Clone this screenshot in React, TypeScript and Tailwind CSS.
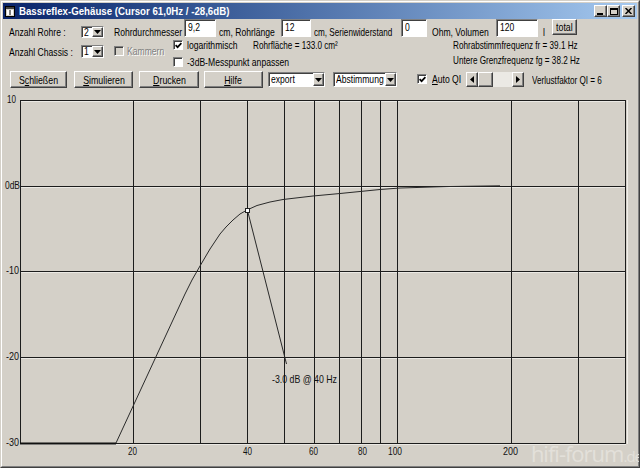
import React from "react";

const raised =
  "border border-t-white border-l-white border-r-[#404040] border-b-[#404040] shadow-[inset_-1px_-1px_0_#808080] bg-[#d4d0c8]";
const sunken =
  "border border-t-[#808080] border-l-[#808080] border-r-white border-b-white shadow-[inset_1px_1px_0_#404040]";

/* The reference is horizontally squeezed: text is drawn narrower than the font's natural width. */
function T({ children, className = "" }: { children: React.ReactNode; className?: string }) {
  return (
    <span className={`inline-block whitespace-nowrap origin-left scale-x-[0.78] ${className}`}>
      {children}
    </span>
  );
}
function TN({ children, className = "" }: { children: React.ReactNode; className?: string }) {
  return (
    <span className={`inline-block whitespace-nowrap origin-left scale-x-[0.74] ${className}`}>
      {children}
    </span>
  );
}
function TC({ children }: { children: React.ReactNode }) {
  return <span className="inline-block whitespace-nowrap origin-center scale-x-[0.8]">{children}</span>;
}

function Check({ checked, disabled }: { checked?: boolean; disabled?: boolean }) {
  return (
    <div
      className={`w-[10px] h-[10px] shrink-0 flex items-center justify-center ${sunken} ${
        disabled ? "bg-[#d4d0c8]" : "bg-white"
      }`}
    >
      {checked && (
        <svg width="7" height="7" viewBox="0 0 7 7">
          <path d="M0.6 3.2 L2.6 5.2 L6.4 1.2" stroke="#000" strokeWidth="1.7" fill="none" />
        </svg>
      )}
    </div>
  );
}

function Arrow({ dir }: { dir: "down" | "left" | "right" }) {
  if (dir === "down")
    return (
      <svg width="7" height="4" viewBox="0 0 7 4">
        <path d="M0 0 H7 L3.5 4 Z" fill="#000" />
      </svg>
    );
  if (dir === "left")
    return (
      <svg width="4" height="7" viewBox="0 0 4 7">
        <path d="M4 0 V7 L0 3.5 Z" fill="#000" />
      </svg>
    );
  return (
    <svg width="4" height="7" viewBox="0 0 4 7">
      <path d="M0 0 V7 L4 3.5 Z" fill="#000" />
    </svg>
  );
}

function Combo({ className, value }: { className: string; value: string }) {
  return (
    <div className={`${sunken} bg-white flex shrink-0 ${className}`}>
      <span className="flex-1 pl-[2px] flex items-center overflow-hidden leading-[11px]">
        <T>{value}</T>
      </span>
      <div className={`w-[11px] ${raised} flex items-center justify-center`}>
        <Arrow dir="down" />
      </div>
    </div>
  );
}

function Field({ className, value }: { className: string; value: string }) {
  return (
    <div className={`${sunken} bg-white shrink-0 pl-[3px] pt-[1px] leading-[13px] ${className}`}>
      <T>{value}</T>
    </div>
  );
}

function Btn({ className, children }: { className: string; children: React.ReactNode }) {
  return (
    <div className={`${raised} shrink-0 flex items-center justify-center leading-[12px] ${className}`}>
      <TC>{children}</TC>
    </div>
  );
}

function TitleBtn({ children, className = "" }: { children: React.ReactNode; className?: string }) {
  return (
    <div className={`${raised} w-[13px] h-[12px] flex items-center justify-center ${className}`}>
      {children}
    </div>
  );
}

const vLines = [20, 133, 200, 247, 284, 314, 339, 361, 380, 397, 511, 578, 625];
const hLines = [100, 186, 271, 357, 443];
const yLabels: [string, number, number, number][] = [
  ["10", 7, 100, 9],
  ["0dB", 5, 186, 15],
  ["-10", 6, 271, 13],
  ["-20", 6, 357, 13],
  ["-30", 6, 443, 13],
];
const xLabels: [string, number, number][] = [
  ["20", 128, 9],
  ["40", 243, 9],
  ["60", 309, 9],
  ["80", 358, 9],
  ["100", 388, 14],
  ["200", 503, 15],
];
const curve =
  "116,443 185,294 192,280 200,266 210,249 220,234 226,227 233,220 240,214 247,210 257,205.5 270,202 283,199.5 300,197.5 313,196 340,193.5 360,191.5 380,189.5 400,188 450,186.5 500,185.8";

function Chart() {
  return (
    <svg width="634" height="375" viewBox="3 90 634 375" className="block" fontSize="11">
      {hLines.map((y) => (
        <line key={y} x1={20} x2={626} y1={y + 0.5} y2={y + 0.5} stroke="#1c1c1c" strokeWidth="1" />
      ))}
      {hLines.map((y) => (
        <line key={"s" + y} x1={20} x2={626} y1={y + 1.5} y2={y + 1.5} stroke="#ebe9e4" strokeWidth="1" />
      ))}
      {vLines.map((x) => (
        <line key={x} x1={x + 0.5} x2={x + 0.5} y1={100} y2={444} stroke="#1c1c1c" strokeWidth="1" />
      ))}
      <line x1={627.5} x2={627.5} y1={100} y2={444} stroke="#f0eeea" strokeWidth="1" />
      <line x1={20} x2={116} y1={443.5} y2={443.5} stroke="#111" strokeWidth="2" />
      <polyline points={curve} fill="none" stroke="#2a2a2a" strokeWidth="1" />
      <line x1={247.5} y1={210.5} x2={286.5} y2={364} stroke="#2a2a2a" strokeWidth="1" />
      <rect x={245.5} y={208.5} width={4} height={4} fill="#fff" stroke="#222" strokeWidth="1" />
      <text x={272} y={380} dominantBaseline="middle" fill="#111" textLength={65} lengthAdjust="spacingAndGlyphs">
        -3.0 dB @ 40 Hz
      </text>
      {yLabels.map(([t, x, y, w]) => (
        <text
          key={t}
          x={x}
          y={y + 0.5}
          dominantBaseline="middle"
          fill="#111"
          textLength={w}
          lengthAdjust="spacingAndGlyphs"
        >
          {t}
        </text>
      ))}
      {xLabels.map(([t, x, w]) => (
        <text
          key={t}
          x={x}
          y={452}
          dominantBaseline="middle"
          fill="#111"
          textLength={w}
          lengthAdjust="spacingAndGlyphs"
        >
          {t}
        </text>
      ))}
    </svg>
  );
}

export default function App() {
  return (
    <div className="relative w-[640px] h-[468px] overflow-hidden bg-[#d4d0c8] text-[11px] text-black font-['Liberation_Sans',Arial,sans-serif] border border-t-[#d4d0c8] border-l-[#d4d0c8] border-r-[#404040] border-b-[#404040]">
      <div className="h-full border border-t-white border-l-white border-r-[#808080] border-b-[#808080] p-[1px] flex flex-col">
        {/* Title bar */}
        <div className="h-[16px] shrink-0 flex items-center bg-linear-to-r from-[#0a246a] to-[#a6caf0] pl-[1px] pr-[2px]">
          <svg width="12" height="12" viewBox="0 0 12 12" className="shrink-0">
            <rect x="1.5" y="1.5" width="9" height="10" fill="#d4d0c8" stroke="#000" />
            <rect x="2" y="2" width="8" height="2" fill="#404040" />
            <rect x="3" y="5" width="6" height="5" fill="#fff" />
            <line x1="6" y1="5" x2="6" y2="10" stroke="#000" />
          </svg>
          <span className="ml-[3px] text-white font-bold text-[11px] leading-[14px] inline-block whitespace-nowrap origin-left scale-x-[0.88]">
            Bassreflex-Gehäuse (Cursor 61,0Hz / -28,6dB)
          </span>
          <div className="flex-1" />
          <TitleBtn>
            <div className="w-[6px] h-[2px] bg-black mt-[5px] mr-[1px]" />
          </TitleBtn>
          <TitleBtn>
            <div className="w-[8px] h-[7px] border border-black border-t-2" />
          </TitleBtn>
          <TitleBtn className="ml-[2px]">
            <svg width="7" height="6" viewBox="0 0 7 6">
              <path d="M0.5 0 L6.5 6 M6.5 0 L0.5 6" stroke="#000" strokeWidth="1.5" />
            </svg>
          </TitleBtn>
        </div>

        {/* Row 1 */}
        <div className="h-[19px] shrink-0 flex items-start pl-[6px]">
          <span className="w-[72px] shrink-0 mt-[7px] leading-[12px]">
            <T className="scale-x-[0.8]">Anzahl Rohre :</T>
          </span>
          <Combo className="w-[23px] h-[12px] mt-[7px]" value="2" />
          <span className="ml-[10px] w-[70px] shrink-0 mt-[7px] leading-[12px]">
            <T>Rohrdurchmesser</T>
          </span>
          <Field className="w-[32px] h-[18px]" value="9,2" />
          <span className="ml-[3px] w-[62px] shrink-0 mt-[7px] leading-[12px]">
            <T>cm, Rohrlänge</T>
          </span>
          <Field className="w-[30px] h-[18px]" value="12" />
          <span className="ml-[3px] w-[87px] shrink-0 mt-[7px] leading-[12px]">
            <TN>cm, Serienwiderstand</TN>
          </span>
          <Field className="w-[26px] h-[18px]" value="0" />
          <span className="ml-[5px] w-[64px] shrink-0 mt-[7px] leading-[12px]">
            <T>Ohm, Volumen</T>
          </span>
          <Field className="w-[42px] h-[18px]" value="120" />
          <span className="ml-[5px] w-[9px] shrink-0 mt-[7px] leading-[12px]">
            <T>l</T>
          </span>
          <Btn className="w-[25px] h-[16px]">total</Btn>
        </div>

        {/* Row 2 */}
        <div className="h-[31px] shrink-0 flex items-start pl-[6px]">
          <span className="w-[72px] shrink-0 mt-[8px] leading-[12px]">
            <T className="scale-x-[0.76]">Anzahl Chassis :</T>
          </span>
          <Combo className="w-[23px] h-[13px] mt-[7px]" value="1" />
          <div className="ml-[10px] w-[59px] shrink-0 h-[12px] mt-[7px] flex items-center">
            <Check disabled />
            <span className="ml-[3px] leading-[12px] text-[#808080] [text-shadow:1px_1px_0_#fff]">
              <T>Kammern</T>
            </span>
          </div>
          <div className="w-[280px] shrink-0 flex flex-col">
            <div className="h-[12px] mt-[1px] flex items-center">
              <Check checked />
              <span className="ml-[4px] w-[66px] shrink-0 leading-[12px]">
                <T>logarithmisch</T>
              </span>
              <span className="leading-[12px]">
                <TN>Rohrfläche = 133.0 cm²</TN>
              </span>
            </div>
            <div className="h-[12px] mt-[5px] flex items-center">
              <Check />
              <span className="ml-[4px] leading-[12px]">
                <T>-3dB-Messpunkt anpassen</T>
              </span>
            </div>
          </div>
          <div className="flex flex-col">
            <span className="mt-[1px] leading-[12px]">
              <TN>Rohrabstimmfrequenz fr = 39.1 Hz</TN>
            </span>
            <span className="mt-[3px] leading-[12px]">
              <TN>Untere Grenzfrequenz fg = 38.2 Hz</TN>
            </span>
          </div>
        </div>

        {/* Row 3 */}
        <div className="h-[21px] shrink-0 flex items-start pl-[7px] pt-[2px]">
          <Btn className="w-[57px] h-[17px]">
            S<u>c</u>hließen
          </Btn>
          <Btn className="ml-[7px] w-[59px] h-[17px]">
            <u>S</u>imulieren
          </Btn>
          <Btn className="ml-[6px] w-[60px] h-[17px]">
            <u>D</u>rucken
          </Btn>
          <Btn className="ml-[5px] w-[59px] h-[17px]">
            <u>H</u>ilfe
          </Btn>
          <Combo className="ml-[5px] w-[57px] h-[15px] mt-[1px]" value="export" />
          <Combo className="ml-[8px] w-[64px] h-[15px] mt-[1px]" value="Abstimmung" />
          <div className="ml-[20px] mt-[2px] h-[12px] flex items-center shrink-0">
            <Check checked />
            <span className="ml-[5px] w-[34px] shrink-0 leading-[12px]">
              <T>
                <u>A</u>uto QI
              </T>
            </span>
          </div>
          <div className="w-[58px] h-[15px] mt-[1px] flex shrink-0">
            <div className={`${raised} w-[12px] flex items-center justify-center`}>
              <Arrow dir="left" />
            </div>
            <div className={`${raised} w-[15px]`} />
            <div className="flex-1 bg-[#ebe9e4]" />
            <div className={`${raised} w-[12px] flex items-center justify-center`}>
              <Arrow dir="right" />
            </div>
          </div>
          <span className="ml-[8px] mt-[3px] leading-[12px]">
            <TN>Verlustfaktor QI = 6</TN>
          </span>
        </div>

        {/* Graph */}
        <div className="flex-1 overflow-hidden">
          <Chart />
        </div>
      </div>

      {/* image-host watermark */}
      <div className="absolute right-[-3px] bottom-[0px] text-[22px] leading-[22px] text-[#e3e0da] font-['Open_Sans','Liberation_Sans',sans-serif] pointer-events-none tracking-[-1px]">
        hifi-forum<span className="text-[15px]">.de</span>
      </div>
    </div>
  );
}
